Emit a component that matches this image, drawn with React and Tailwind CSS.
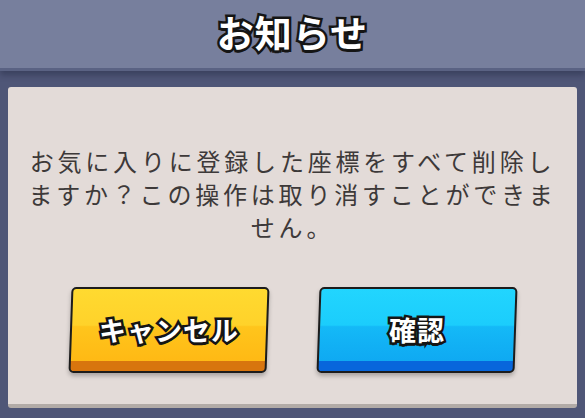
export default function App() {
    const jp = 'font-["Noto_Sans_CJK_JP","Noto_Sans",sans-serif]';
    const outline = '[-webkit-text-stroke:5px_#151515] [paint-order:stroke_fill] [text-shadow:0_3px_0_#151515]';

    return (
        <div className={`w-[585px] h-[418px] bg-[#4f5677] flex flex-col overflow-hidden ${jp}`}>
            <div className="h-[71px] shrink-0 bg-[#777f9d] border-b-[3px] border-[#5a6283] shadow-[0_4px_6px_rgba(20,25,50,0.35)] flex items-center justify-center">
                <span className={`text-[37px] font-bold text-white leading-none tracking-[1px] -mt-[3px] ${outline}`}>
                    お知らせ
                </span>
            </div>

            <div className="px-[8px] pt-[16px]">
                <div className="h-[321px] bg-[#e3dbd8] rounded-[3px] border-b-[4px] border-[#b2aba7] flex flex-col items-center">
                    <p className="mt-[57px] text-center text-[24px] leading-[33px] tracking-[3.8px] text-[#3d3939]">
                        お気に入りに登録した座標をすべて削除し<br />
                        ますか？この操作は取り消すことができま<br />
                        せん。
                    </p>

                    <div className="mt-[44px] flex gap-[50px]">
                        <button className="w-[198px] h-[86px] -skew-x-2 rounded-[5px] bg-[#1c1c1c] p-[2px] shadow-[0_3px_4px_rgba(0,0,0,0.25)]">
                            <div className="h-full rounded-[3px] bg-[linear-gradient(to_bottom,#ffda30_0%,#ffd22a_44%,#ffc51c_46%,#ffb914_88%,#d8750e_88%,#d8750e_100%)] flex items-center justify-center pb-[2px]">
                                <span className={`skew-x-2 text-[27px] font-bold text-white leading-none tracking-[1px] ${outline} [-webkit-text-stroke:4px_#151515] [text-shadow:0_2px_0_#151515]`}>
                                    キャンセル
                                </span>
                            </div>
                        </button>
                        <button className="w-[198px] h-[86px] -skew-x-2 rounded-[5px] bg-[#1c1c1c] p-[2px] shadow-[0_3px_4px_rgba(0,0,0,0.25)]">
                            <div className="h-full rounded-[3px] bg-[linear-gradient(to_bottom,#22d5fe_0%,#1bcdfc_44%,#14b9f7_46%,#0fa9f2_88%,#0866dc_88%,#0866dc_100%)] flex items-center justify-center pb-[2px]">
                                <span className={`skew-x-2 text-[27px] font-bold text-white leading-none tracking-[1px] ${outline} [-webkit-text-stroke:4px_#151515] [text-shadow:0_2px_0_#151515]`}>
                                    確認
                                </span>
                            </div>
                        </button>
                    </div>
                </div>
            </div>
        </div>
    );
}
